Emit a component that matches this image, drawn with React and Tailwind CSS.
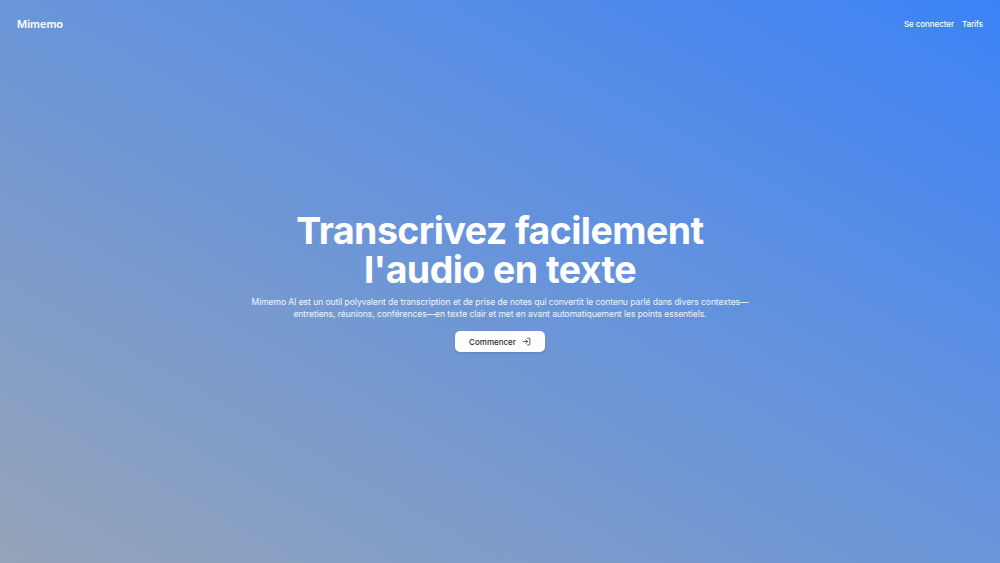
import React from "react";
import { LogIn } from "lucide-react";

const App = () => {
  return (
    <div
      className="relative flex h-[563px] w-full flex-col overflow-hidden bg-gradient-to-tr from-[#94a3b8] to-[#3b82f6] text-white"
      style={{ fontFamily: "Inter, 'Noto Sans', sans-serif" }}
    >
      {/* Header */}
      <header className="flex h-12 items-center justify-between px-[17px]">
        <span className="text-[11px] font-semibold">Mimemo</span>
        <nav className="flex items-center gap-2 text-[8px] font-medium tracking-[-0.01em]">
          <a href="#">Se connecter</a>
          <a href="#">Tarifs</a>
        </nav>
      </header>

      {/* Hero */}
      <main className="flex flex-1 flex-col items-center justify-center pb-[48px] text-center">
        <h1 className="text-[37.5px] font-bold leading-[39px] tracking-[-0.015em]">
          Transcrivez facilement
          <br />
          l'audio en texte
        </h1>
        <p className="mt-[7px] whitespace-nowrap text-[8.5px] leading-[12px] tracking-[-0.005em] text-white/90">
          Mimemo AI est un outil polyvalent de transcription et de prise de notes qui convertit le contenu parlé dans divers contextes—
          <br />
          entretiens, réunions, conférences—en texte clair et met en avant automatiquement les points essentiels.
        </p>
        <button className="mt-[11px] flex h-[21px] w-[90px] items-center justify-center gap-[6px] rounded-[5px] bg-white text-[8px] font-medium text-gray-800 shadow-sm">
          Commencer
          <LogIn size={9} strokeWidth={2} />
        </button>
      </main>
    </div>
  );
};

export default App;
